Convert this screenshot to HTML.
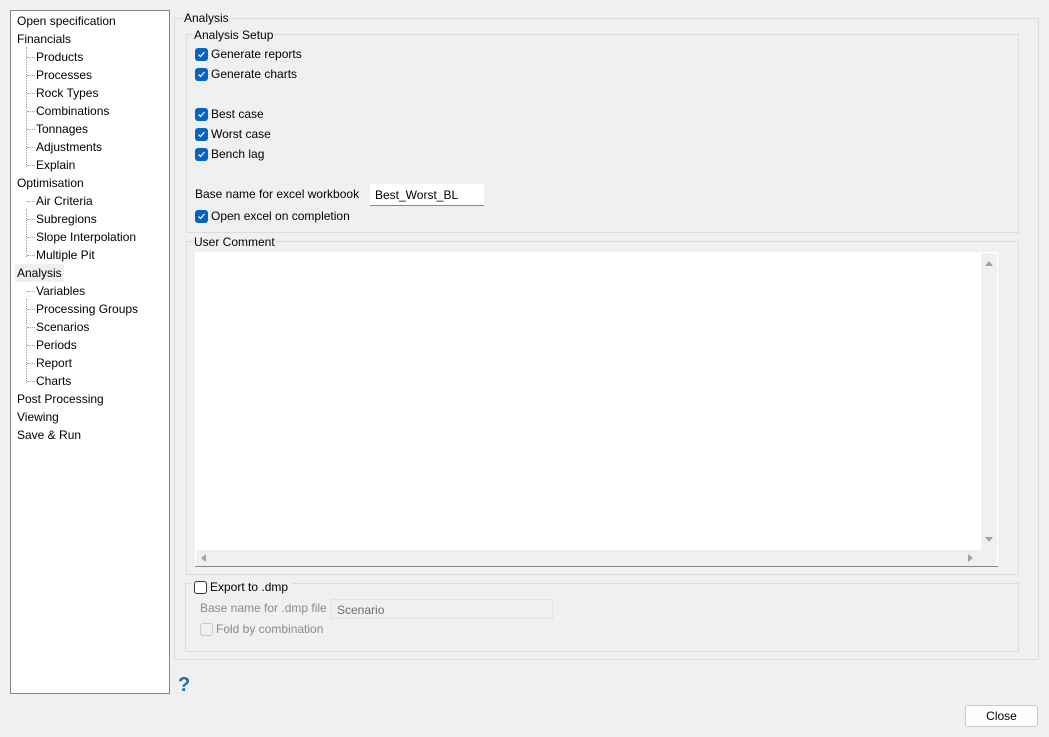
<!DOCTYPE html>
<html><head><meta charset="utf-8"><style>
*{box-sizing:border-box;margin:0;padding:0}
body{width:1049px;height:737px;background:#f0f0f0;font-family:"Liberation Sans",sans-serif;font-size:12px;color:#000;position:relative;overflow:hidden}
.a{position:absolute;white-space:nowrap}
.tree{position:absolute;left:10px;top:10px;width:160px;height:684px;background:#fff;border:1px solid #828790}
.fr{position:absolute;border:1px solid #dcdcdc}
.lg{position:absolute;background:#f0f0f0;padding:0 1px;line-height:14px}
.cb{position:absolute;width:13px;height:13px;border-radius:3px;background:#0563c1}
.cb svg{position:absolute;left:1px;top:1px}
.cbe{position:absolute;width:13px;height:13px;border-radius:3px;border:1px solid #333;background:#fff}
.vl{position:absolute;border-left:1px dotted #a0a0a0}
.hl{position:absolute;border-top:1px dotted #a0a0a0;width:8px}
</style></head><body>
<div class="tree">
<div class="vl" style="left:15px;top:36px;height:120px"></div>
<div class="vl" style="left:15px;top:198px;height:48px"></div>
<div class="vl" style="left:15px;top:288px;height:84px"></div>
</div>
<div class="a" style="left:17px;top:12px;line-height:18px">Open specification</div>
<div class="a" style="left:17px;top:30px;line-height:18px">Financials</div>
<div class="a" style="left:36px;top:48px;line-height:18px">Products</div>
<div class="a" style="left:36px;top:66px;line-height:18px">Processes</div>
<div class="a" style="left:36px;top:84px;line-height:18px">Rock Types</div>
<div class="a" style="left:36px;top:102px;line-height:18px">Combinations</div>
<div class="a" style="left:36px;top:120px;line-height:18px">Tonnages</div>
<div class="a" style="left:36px;top:138px;line-height:18px">Adjustments</div>
<div class="a" style="left:36px;top:156px;line-height:18px">Explain</div>
<div class="a" style="left:17px;top:174px;line-height:18px">Optimisation</div>
<div class="a" style="left:36px;top:192px;line-height:18px">Air Criteria</div>
<div class="a" style="left:36px;top:210px;line-height:18px">Subregions</div>
<div class="a" style="left:36px;top:228px;line-height:18px">Slope Interpolation</div>
<div class="a" style="left:36px;top:246px;line-height:18px">Multiple Pit</div>
<div class="a" style="left:15px;top:264px;line-height:18px;background:#f0f0f0;padding:0 2px">Analysis</div>
<div class="a" style="left:36px;top:282px;line-height:18px">Variables</div>
<div class="a" style="left:36px;top:300px;line-height:18px">Processing Groups</div>
<div class="a" style="left:36px;top:318px;line-height:18px">Scenarios</div>
<div class="a" style="left:36px;top:336px;line-height:18px">Periods</div>
<div class="a" style="left:36px;top:354px;line-height:18px">Report</div>
<div class="a" style="left:36px;top:372px;line-height:18px">Charts</div>
<div class="a" style="left:17px;top:390px;line-height:18px">Post Processing</div>
<div class="a" style="left:17px;top:408px;line-height:18px">Viewing</div>
<div class="a" style="left:17px;top:426px;line-height:18px">Save &amp; Run</div>
<div class="hl" style="left:27px;top:57px"></div><div class="hl" style="left:27px;top:75px"></div><div class="hl" style="left:27px;top:93px"></div><div class="hl" style="left:27px;top:111px"></div><div class="hl" style="left:27px;top:129px"></div><div class="hl" style="left:27px;top:147px"></div><div class="hl" style="left:27px;top:165px"></div>
<div class="hl" style="left:27px;top:201px"></div><div class="hl" style="left:27px;top:219px"></div><div class="hl" style="left:27px;top:237px"></div><div class="hl" style="left:27px;top:255px"></div>
<div class="hl" style="left:27px;top:291px"></div><div class="hl" style="left:27px;top:309px"></div><div class="hl" style="left:27px;top:327px"></div><div class="hl" style="left:27px;top:345px"></div><div class="hl" style="left:27px;top:363px"></div><div class="hl" style="left:27px;top:381px"></div>

<div class="fr" style="left:174px;top:18px;width:865px;height:642px"></div>
<div class="lg" style="left:183px;top:11px">Analysis</div>
<div class="fr" style="left:186px;top:34px;width:833px;height:199px"></div>
<div class="lg" style="left:193px;top:28px">Analysis Setup</div>

<div class="cb" style="left:195px;top:48px"><svg width="11" height="11"><path d="M2.5 5.5l2 2 4-4.5" stroke="#fff" stroke-width="1.2" fill="none"/></svg></div>
<div class="a" style="left:211px;top:47px">Generate reports</div>
<div class="cb" style="left:195px;top:68px"><svg width="11" height="11"><path d="M2.5 5.5l2 2 4-4.5" stroke="#fff" stroke-width="1.2" fill="none"/></svg></div>
<div class="a" style="left:211px;top:67px">Generate charts</div>
<div class="cb" style="left:195px;top:108px"><svg width="11" height="11"><path d="M2.5 5.5l2 2 4-4.5" stroke="#fff" stroke-width="1.2" fill="none"/></svg></div>
<div class="a" style="left:211px;top:107px">Best case</div>
<div class="cb" style="left:195px;top:128px"><svg width="11" height="11"><path d="M2.5 5.5l2 2 4-4.5" stroke="#fff" stroke-width="1.2" fill="none"/></svg></div>
<div class="a" style="left:211px;top:127px">Worst case</div>
<div class="cb" style="left:195px;top:148px"><svg width="11" height="11"><path d="M2.5 5.5l2 2 4-4.5" stroke="#fff" stroke-width="1.2" fill="none"/></svg></div>
<div class="a" style="left:211px;top:147px">Bench lag</div>
<div class="a" style="left:195px;top:187px">Base name for excel workbook</div>
<div class="a" style="left:370px;top:184px;width:114px;height:22px;background:#fff;border-bottom:1px solid #888;padding:4px 5px">Best_Worst_BL</div>
<div class="cb" style="left:195px;top:210px"><svg width="11" height="11"><path d="M2.5 5.5l2 2 4-4.5" stroke="#fff" stroke-width="1.2" fill="none"/></svg></div>
<div class="a" style="left:211px;top:209px">Open excel on completion</div>

<div class="fr" style="left:186px;top:241px;width:833px;height:334px"></div>
<div class="lg" style="left:193px;top:235px">User Comment</div>
<div class="a" style="left:195px;top:252px;width:803px;height:315px;background:#fff;border-bottom:1px solid #888"></div>
<div class="a" style="left:981px;top:253px;width:16px;height:313px;background:#f0f0f0"></div>
<div class="a" style="left:196px;top:550px;width:785px;height:16px;background:#f0f0f0"></div>
<svg class="a" style="left:981px;top:253px" width="16" height="313"><path d="M4 13h8l-4-5z" fill="#a3a3a3"/><path d="M4 284h8l-4 5z" fill="#a3a3a3"/></svg>
<svg class="a" style="left:196px;top:550px" width="785" height="16"><path d="M10 4v8l-5-4z" fill="#a3a3a3"/><path d="M772 4v8l5-4z" fill="#a3a3a3"/></svg>

<div class="fr" style="left:185px;top:583px;width:834px;height:69px"></div>
<div class="lg" style="left:192px;top:580px;width:100px;height:16px"></div>
<div class="cbe" style="left:194px;top:581px"></div>
<div class="a" style="left:210px;top:580px">Export to .dmp</div>
<div class="a" style="left:200px;top:601px;color:#8a8a8a">Base name for .dmp file</div>
<div class="a" style="left:331px;top:599px;width:222px;height:20px;border:1px solid #e2e2e2;background:#f0f0f0;padding:3px 5px;color:#6d6d6d">Scenario</div>
<div class="cbe" style="left:200px;top:623px;border-color:#c8c8c8;background:#f0f0f0"></div>
<div class="a" style="left:216px;top:622px;color:#8a8a8a">Fold by combination</div>

<div class="a" style="left:178px;top:674px;font-size:20px;font-weight:bold;color:#1b6db0">?</div>
<div class="a" style="left:965px;top:705px;width:73px;height:22px;background:#fdfdfd;border:1px solid #c8c8c8;border-radius:3px;text-align:center;line-height:20px">Close</div>
</body></html>
